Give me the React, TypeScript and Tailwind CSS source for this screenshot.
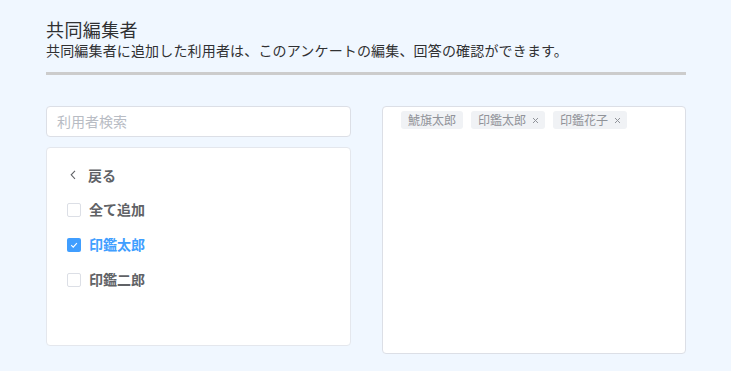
import React from 'react';

const font = { fontFamily: '"Noto Sans CJK JP", "Noto Sans", sans-serif' };

interface Option {
  label: string;
  checked: boolean;
}

const options: Option[] = [
  { label: '全て追加', checked: false },
  { label: '印鑑太郎', checked: true },
  { label: '印鑑二郎', checked: false },
];

const tags = [
  { label: '鯱旗太郎', closable: false },
  { label: '印鑑太郎', closable: true },
  { label: '印鑑花子', closable: true },
];

function Checkbox({ checked }: { checked: boolean }) {
  if (checked) {
    return (
      <span className="flex h-[14px] w-[14px] items-center justify-center rounded-[2px] bg-[#409eff]">
        <svg width="10" height="10" viewBox="0 0 10 10" fill="none">
          <path d="M2.2 5.2 L4.2 7.1 L7.9 3.1" stroke="#fff" strokeWidth="1.1" />
        </svg>
      </span>
    );
  }
  return <span className="h-[14px] w-[14px] rounded-[2px] border border-[#dcdfe6] bg-white" />;
}

export default function App() {
  return (
    <div className="min-h-[371px] w-full bg-[#f0f7ff] pl-[46px] pt-[18px]" style={font}>
      <h1 className="text-[18px] leading-[22px] tracking-[0.4px] text-[#303133]">共同編集者</h1>
      <p className="text-[14px] leading-[20px] tracking-[0.16px] text-[#303133]">
        共同編集者に追加した利用者は、このアンケートの編集、回答の確認ができます。
      </p>
      <div className="mt-[12px] h-[3px] w-[640px] bg-[#cccccc]" />

      <div className="mt-[31px] flex gap-[31px]">
        <div className="flex w-[305px] flex-col gap-[10px]">
          <div className="flex h-[31px] items-center rounded-[4px] border border-[#dcdfe6] bg-white px-[10px] text-[14px] text-[#b8bcc4]">
            利用者検索
          </div>
          <div className="h-[199px] rounded-[4px] border border-[#e4e7ed] bg-white pl-[20px] pt-[10px]">
            <div className="flex h-[34px] items-center gap-[8px] text-[14px] font-bold text-[#606266]">
              <svg width="12" height="12" viewBox="0 0 12 12" fill="none" className="ml-[1px]">
                <path d="M7 1.8 L3.2 5.8 L7 9.8" stroke="#606266" strokeWidth="1.1" />
              </svg>
              <span>戻る</span>
            </div>
            {options.map((o) => (
              <div key={o.label} className="flex h-[35px] items-center gap-[8px]">
                <Checkbox checked={o.checked} />
                <span
                  className={`text-[14px] font-bold ${o.checked ? 'text-[#409eff]' : 'text-[#606266]'}`}
                >
                  {o.label}
                </span>
              </div>
            ))}
          </div>
        </div>

        <div className="h-[248px] w-[304px] rounded-[4px] border border-[#dcdfe6] bg-white pl-[18px] pt-[4px]">
          <div className="flex gap-[8px]">
            {tags.map((t) => (
              <span
                key={t.label}
                className={`flex h-[18px] items-center gap-[6px] rounded-[3px] bg-[#f0f2f5] pl-[7px] text-[12px] text-[#909399] ${t.closable ? 'pr-[6px]' : 'pr-[7px]'}`}
              >
                {t.label}
                {t.closable ? (
                  <svg width="7" height="7" viewBox="0 0 7 7" fill="none">
                    <path d="M1 1 L6 6 M6 1 L1 6" stroke="#909399" strokeWidth="1" />
                  </svg>
                ) : null}
              </span>
            ))}
          </div>
        </div>
      </div>
    </div>
  );
}
